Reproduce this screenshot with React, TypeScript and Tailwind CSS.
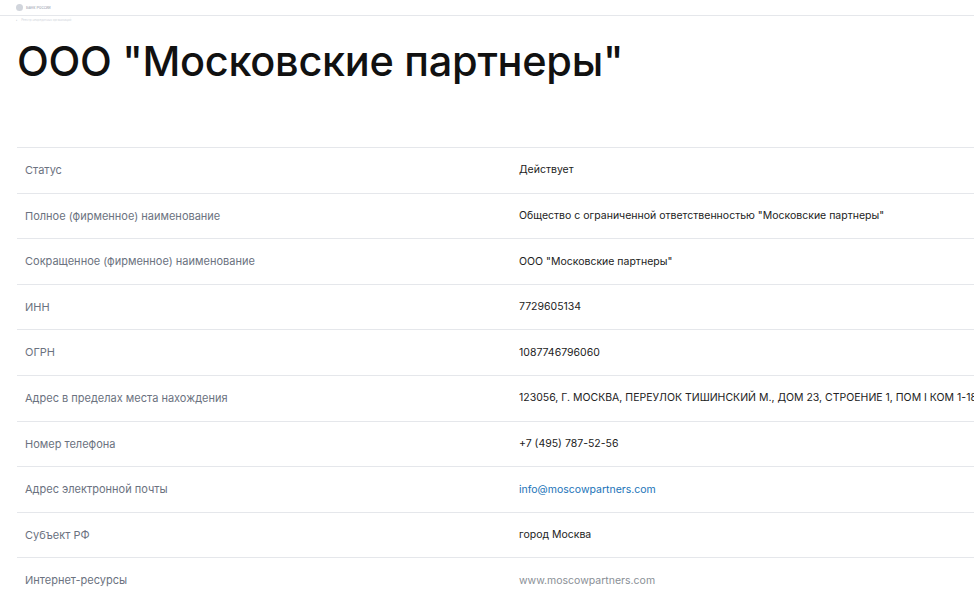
export default function App() {
  const rows: [string, string, string?][] = [
    ["Статус", "Действует"],
    ["Полное (фирменное) наименование", 'Общество с ограниченной ответственностью "Московские партнеры"'],
    ["Сокращенное (фирменное) наименование", 'ООО "Московские партнеры"'],
    ["ИНН", "7729605134"],
    ["ОГРН", "1087746796060"],
    ["Адрес в пределах места нахождения", "123056, Г. МОСКВА, ПЕРЕУЛОК ТИШИНСКИЙ М., ДОМ 23, СТРОЕНИЕ 1, ПОМ I КОМ 1-18"],
    ["Номер телефона", "+7 (495) 787-52-56"],
    ["Адрес электронной почты", "info@moscowpartners.com", "link"],
    ["Субъект РФ", "город Москва"],
    ["Интернет-ресурсы", "www.moscowpartners.com", "muted"],
  ];
  return (
    <div className="w-[974px] h-[598px] overflow-hidden bg-white" style={{ fontFamily: "Inter, 'Noto Sans', sans-serif" }}>
      <div className="h-[16px] border-b border-gray-200 flex items-center pl-[16px] gap-[3px]">
        <div className="w-[7px] h-[7px] rounded-full bg-gray-300" />
        <span className="text-[4px] text-gray-400">Банк России</span>
      </div>
      <div className="h-[8px] pl-[16px] flex items-center gap-[4px]">
        <span className="text-[3px] text-gray-400">‹</span>
        <span className="text-[3px] text-gray-300">Реестр некредитных организаций</span>
      </div>
      <h1 className="pl-[17px] mt-[11px] text-[41.5px] leading-[52px] font-medium text-[#111] tracking-[-0.3px]">ООО "Московские партнеры"</h1>
      <div className="ml-[17px] mt-[60px] w-[1000px] border-t border-gray-200">
        {rows.map(([l, v, t]) => (
          <div key={l} className="flex items-center h-[45.6px] border-b border-gray-200">
            <div className="w-[502px] pl-[8px] text-[11px] text-[#6b7280]">{l}</div>
            <div className={"text-[10.5px] whitespace-nowrap " + (t === "link" ? "text-[#1a73b8]" : t === "muted" ? "text-[#8a8f96]" : "text-[#222]")}>{v}</div>
          </div>
        ))}
      </div>
    </div>
  );
}
